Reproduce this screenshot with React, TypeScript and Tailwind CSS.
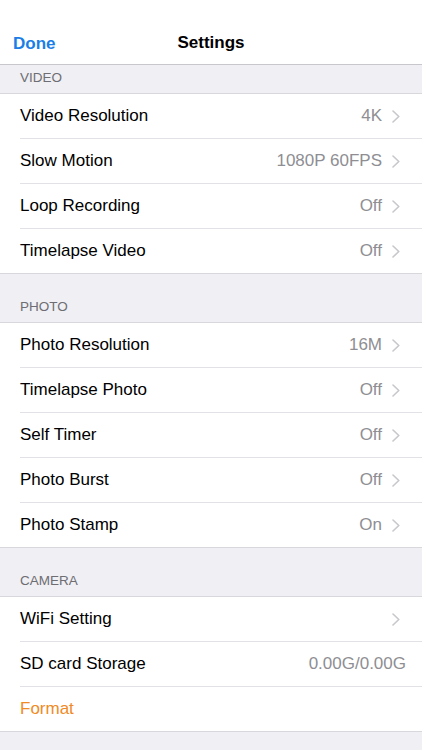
import React from "react";

const Chevron = () => (
  <svg width="8" height="13" viewBox="0 0 8 13" className="ml-[10px] shrink-0">
    <polyline points="1,1 6.8,6.5 1,12" fill="none" stroke="#c7c7cc" strokeWidth="1.6" strokeLinecap="round" strokeLinejoin="round" />
  </svg>
);

type Row = { label: string; value?: string; chevron?: boolean; orange?: boolean };

const Group = ({ rows }: { rows: Row[] }) => (
  <div className="bg-white border-y border-[#d8d8dc]">
    {rows.map((r, i) => (
      <div key={r.label} className="pl-[20px]">
        <div
          className={`h-[44px] flex items-center ${r.chevron ? "pr-[22px]" : "pr-[16px]"} ${
            i < rows.length - 1 ? "border-b border-[#e2e2e6] h-[45px]" : ""
          }`}
        >
          <span className={`flex-1 text-[17px] ${r.orange ? "text-[#f08a24]" : "text-black"}`}>{r.label}</span>
          {r.value && <span className="text-[17px] text-[#8e8e93]">{r.value}</span>}
          {r.chevron && <Chevron />}
        </div>
      </div>
    ))}
  </div>
);

const Header = ({ title, h }: { title: string; h: string }) => (
  <div className={`${h} flex items-end pl-[20px] pb-[5px] text-[13.5px] text-[#6d6d72]`}>{title}</div>
);

export default function App() {
  return (
    <div className="w-[422px] h-[750px] overflow-hidden bg-[#efeff4]" style={{ fontFamily: '"Liberation Sans", Arial, sans-serif' }}>
      <div className="h-[65px] bg-white border-b border-[#c8c7cc] pt-[20px] relative flex items-center">
        <span className="absolute left-[13px] top-[34px] text-[17px] font-semibold text-[#1a7ee6] leading-[20px]">Done</span>
        <span className="w-full text-center text-[17px] font-bold text-black leading-[20px] pt-[2px]">Settings</span>
      </div>
      <Header title="VIDEO" h="h-[28px]" />
      <Group
        rows={[
          { label: "Video Resolution", value: "4K", chevron: true },
          { label: "Slow Motion", value: "1080P 60FPS", chevron: true },
          { label: "Loop Recording", value: "Off", chevron: true },
          { label: "Timelapse Video", value: "Off", chevron: true },
        ]}
      />
      <Header title="PHOTO" h="h-[48px]" />
      <Group
        rows={[
          { label: "Photo Resolution", value: "16M", chevron: true },
          { label: "Timelapse Photo", value: "Off", chevron: true },
          { label: "Self Timer", value: "Off", chevron: true },
          { label: "Photo Burst", value: "Off", chevron: true },
          { label: "Photo Stamp", value: "On", chevron: true },
        ]}
      />
      <Header title="CAMERA" h="h-[48px]" />
      <Group
        rows={[
          { label: "WiFi Setting", chevron: true },
          { label: "SD card Storage", value: "0.00G/0.00G" },
          { label: "Format", orange: true },
        ]}
      />
      <div className="h-[18px]" />
      <div className="h-[40px] bg-white border-t border-[#d8d8dc]" />
    </div>
  );
}
